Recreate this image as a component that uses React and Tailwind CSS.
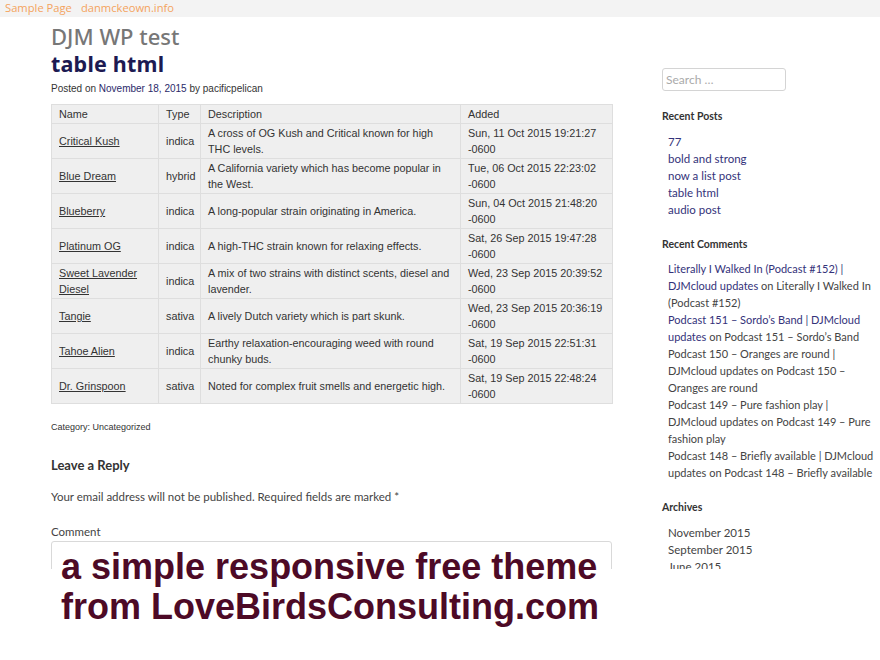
import React from "react";

const rows = [
  ["Critical Kush", "indica", "A cross of OG Kush and Critical known for high THC levels.", "Sun, 11 Oct 2015 19:21:27 -0600"],
  ["Blue Dream", "hybrid", "A California variety which has become popular in the West.", "Tue, 06 Oct 2015 22:23:02 -0600"],
  ["Blueberry", "indica", "A long-popular strain originating in America.", "Sun, 04 Oct 2015 21:48:20 -0600"],
  ["Platinum OG", "indica", "A high-THC strain known for relaxing effects.", "Sat, 26 Sep 2015 19:47:28 -0600"],
  ["Sweet Lavender Diesel", "indica", "A mix of two strains with distinct scents, diesel and lavender.", "Wed, 23 Sep 2015 20:39:52 -0600"],
  ["Tangie", "sativa", "A lively Dutch variety which is part skunk.", "Wed, 23 Sep 2015 20:36:19 -0600"],
  ["Tahoe Alien", "indica", "Earthy relaxation-encouraging weed with round chunky buds.", "Sat, 19 Sep 2015 22:51:31 -0600"],
  ["Dr. Grinspoon", "sativa", "Noted for complex fruit smells and energetic high.", "Sat, 19 Sep 2015 22:48:24 -0600"],
];

const recentPosts = ["77", "bold and strong", "now a list post", "table html", "audio post"];

function Link({ children }) {
  return <span className="text-[#34327a]">{children}</span>;
}

export default function App() {
  const cell = "border border-[#dedede] px-[7px] py-[1px] align-middle";
  return (
    <div className="relative w-[880px] h-[660px] bg-white overflow-hidden">
      <div className="h-[569px] overflow-hidden">
        {/* top bar */}
        <div className="h-[17px] bg-[#f3f3f3] flex items-center gap-[9px] pl-[5px] text-[11.2px] text-[#f4a35e] font-['Open_Sans',sans-serif]">
          <span>Sample Page</span>
          <span>danmckeown.info</span>
        </div>

        <div className="flex">
          <main className="ml-[51px] w-[561px]">
            <h1 className="mt-[6px] text-[22px] leading-[26px] font-medium text-[#777] font-['Noto_Sans',sans-serif]">DJM WP test</h1>
            <h2 className="mt-[2px] text-[21.5px] leading-[26px] font-bold text-[#1d1a52] font-['Noto_Sans',sans-serif] tracking-[0.2px]">table html</h2>
            <p className="mt-[5px] text-[10px] leading-[14px] text-[#333] font-['Liberation_Sans',Arial,sans-serif]">
              Posted on <span className="text-[#2b2a6a]">November 18, 2015</span> by pacificpelican
            </p>

            <table className="mt-[8px] w-[561px] table-fixed border-collapse bg-[#efefef] text-[10.8px] leading-[16px] text-[#333] font-['Liberation_Sans',Arial,sans-serif]">
              <colgroup>
                <col className="w-[107px]" />
                <col className="w-[42px]" />
                <col className="w-[260px]" />
                <col className="w-[152px]" />
              </colgroup>
              <thead>
                <tr>
                  <th className={`${cell} text-left font-normal`}>Name</th>
                  <th className={`${cell} text-left font-normal`}>Type</th>
                  <th className={`${cell} text-left font-normal`}>Description</th>
                  <th className={`${cell} text-left font-normal`}>Added</th>
                </tr>
              </thead>
              <tbody>
                {rows.map((r) => (
                  <tr key={r[0]} className="h-[35px]">
                    <td className={cell}><span className="underline">{r[0]}</span></td>
                    <td className={cell}>{r[1]}</td>
                    <td className={cell}>{r[2]}</td>
                    <td className={cell}>{r[3]}</td>
                  </tr>
                ))}
              </tbody>
            </table>

            <p className="mt-[17px] text-[9px] leading-[12px] text-[#333] font-['Liberation_Sans',Arial,sans-serif]">Category: Uncategorized</p>

            <div className="font-['Lato',sans-serif]">
              <h3 className="mt-[23px] text-[13px] leading-[18px] font-bold text-[#333]">Leave a Reply</h3>
              <p className="mt-[15px] text-[11.5px] leading-[16px] text-[#444]">
                Your email address will not be published. Required fields are marked *
              </p>
              <p className="mt-[20px] text-[11.5px] leading-[14px] text-[#444]">Comment</p>
              <div className="mt-[2px] h-[60px] border border-[#d9d9d9] rounded-[3px]"></div>
            </div>
          </main>

          <aside className="ml-[50px] w-[218px] whitespace-nowrap font-['Lato',sans-serif] text-[11px] leading-[17px] text-[#444]">
            <div className="mt-[51px] w-[124px] h-[23px] border border-[#d4d4d4] rounded-[3px] flex items-center pl-[3px] text-[#aaa] text-[12px]">
              Search …
            </div>

            <h4 className="mt-[18px] text-[10.5px] leading-[14px] font-bold text-[#333]">Recent Posts</h4>
            <ul className="mt-[10px] pl-[6px] text-[11.5px]">
              {recentPosts.map((p) => (
                <li key={p}><Link>{p}</Link></li>
              ))}
            </ul>

            <h4 className="mt-[19px] text-[10.5px] leading-[14px] font-bold text-[#333]">Recent Comments</h4>
            <ul className="mt-[9px] pl-[6px]">
              <li>
                <Link>Literally I Walked In (Podcast #152) |<br />DJMcloud updates</Link> on Literally I Walked In<br />(Podcast #152)
              </li>
              <li>
                <Link>Podcast 151 – Sordo’s Band | DJMcloud<br />updates</Link> on Podcast 151 – Sordo’s Band
              </li>
              <li>Podcast 150 – Oranges are round |<br />DJMcloud updates on Podcast 150 –<br />Oranges are round</li>
              <li>Podcast 149 – Pure fashion play |<br />DJMcloud updates on Podcast 149 – Pure<br />fashion play</li>
              <li>Podcast 148 – Briefly available | DJMcloud<br />updates on Podcast 148 – Briefly available</li>
            </ul>

            <h4 className="mt-[19px] text-[10.5px] leading-[14px] font-bold text-[#333]">Archives</h4>
            <ul className="mt-[10px] pl-[6px] text-[11.5px]">
              <li>November 2015</li>
              <li>September 2015</li>
              <li>June 2015</li>
            </ul>
          </aside>
        </div>
      </div>

      {/* promo caption over the screenshot */}
      <div className="absolute left-[61px] top-[547px] text-[36px] leading-[40px] font-bold text-[#4d0a26] font-['Liberation_Sans',Arial,sans-serif]">
        <p>a simple responsive free theme</p>
        <p>from LoveBirdsConsulting.com</p>
      </div>
    </div>
  );
}
